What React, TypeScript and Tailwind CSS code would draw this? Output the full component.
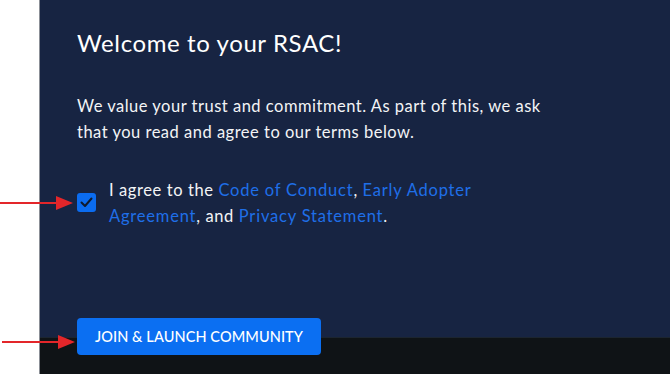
import React from "react";

function Arrow({ className }: { className: string }) {
  return (
    <svg className={className} width="74" height="16" viewBox="0 0 74 16" fill="none">
      <line x1="0" y1="8" x2="60" y2="8" stroke="#e3262a" strokeWidth="2" />
      <path d="M56 1 L73 8 L56 15 Z" fill="#e3262a" />
    </svg>
  );
}

function CheckBox() {
  return (
    <span className="mt-[16px] flex h-[19px] w-[19px] shrink-0 items-center justify-center rounded-[3px] bg-[#0b6cf0]">
      <svg width="13" height="11" viewBox="0 0 13 11" fill="none">
        <path d="M1.5 5.5 L5 9 L11.5 1.5" stroke="#0f1a2e" strokeWidth="2" strokeLinecap="round" strokeLinejoin="round" />
      </svg>
    </span>
  );
}

export default function App() {
  return (
    <div className="relative flex h-[374px] w-[670px] overflow-hidden bg-white font-['Lato',sans-serif]">
      <div className="w-[40px] shrink-0 border-r border-[#8b8f96] bg-white" />
      <div className="flex min-w-0 flex-1 flex-col">
        <section className="flex h-[337px] flex-col bg-[#172442] pl-[37px] pt-[27px] text-white">
          <h1 className="text-[24px] font-normal leading-[32px] tracking-[0.6px]">Welcome to your RSAC!</h1>
          <p className="mt-[34px] max-w-[490px] text-[16.5px] leading-[26px] tracking-[0.5px] text-[#f3f4f6]">
            We value your trust and commitment. As part of this, we ask that you read and agree to our terms below.
          </p>
          <label className="mt-[32px] flex gap-[13px]">
            <CheckBox />
            <span className="max-w-[380px] text-[16.5px] leading-[26px] tracking-[0.6px] text-[#f3f4f6]">
              I agree to the <a className="tracking-[0.8px] text-[#1f6fe8]">Code of Conduct</a>,{" "}
              <a className="tracking-[0.8px] text-[#1f6fe8]">Early Adopter Agreement</a>, and{" "}
              <a className="tracking-[0.8px] text-[#1f6fe8]">Privacy Statement</a>.
            </span>
          </label>
          <button
            type="button"
            className="relative z-10 -mb-[18px] mt-auto h-[37px] w-[244px] self-start rounded-[4px] bg-[#0b6ff2] text-[14.5px] font-medium tracking-[0.1px] text-white"
          >
            JOIN &amp; LAUNCH COMMUNITY
          </button>
        </section>
        <footer className="flex-1 border-t border-[#1c2530] bg-[#0f1316]" />
      </div>
      <Arrow className="absolute left-0 top-[195px]" />
      <Arrow className="absolute left-[2px] top-[334px]" />
    </div>
  );
}
